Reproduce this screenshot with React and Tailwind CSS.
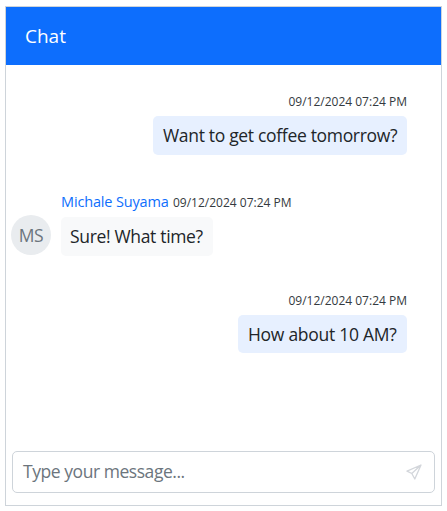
function Stamp({ className = "" }) {
  return (
    <span className={`whitespace-nowrap text-[12px] leading-[18px] text-[#343a40] ${className}`}>
      09/12/2024 07:24 PM
    </span>
  );
}

function Sent({ children, className }) {
  return (
    <div className="flex flex-col items-end">
      <Stamp />
      <div className={`mt-[5px] flex items-center rounded-[5px] bg-[#e7f0ff] pl-2.5 whitespace-nowrap text-[#212529] ${className}`}>
        {children}
      </div>
    </div>
  );
}

export default function App() {
  return (
    <div className="h-[511px] w-[447px] bg-white pt-1.5 pl-[5px] font-['Open_Sans','Noto_Sans',sans-serif] text-[17.5px] font-normal">
      <div className="flex h-[500px] w-[437px] flex-col border border-[#ced4da] bg-white">
        <header className="flex h-[58px] shrink-0 items-center bg-[#0d6efd] pl-[19px] text-[19px] text-white">
          Chat
        </header>
        <main className="flex grow flex-col pt-7 pr-[34px] pl-[5px]">
          <Sent className="h-[39px] w-[254px] tracking-[-0.32px]">Want to get coffee tomorrow?</Sent>
          <div className="mt-[37px] flex items-start gap-2.5">
            <div className="mt-[23px] flex size-10 items-center justify-center rounded-full bg-[#e9ecef] tracking-[-0.5px] text-[#6c757d]">
              MS
            </div>
            <div>
              <div className="flex h-5 items-center gap-[5px]">
                <span className="w-[107px] whitespace-nowrap pb-px text-[14.5px] tracking-[-0.15px] text-[#0d6efd]">
                  Michale Suyama
                </span>
                <Stamp className="pt-px" />
              </div>
              <div className="mt-[5px] flex h-[39px] w-[152px] items-center rounded-[5px] bg-[#f8f9fa] pl-[9px] whitespace-nowrap tracking-[-0.33px] text-[#212529]">
                Sure! What time?
              </div>
            </div>
          </div>
          <div className="mt-9">
            <Sent className="h-[38px] w-[169px] tracking-[-0.28px]">How about 10 AM?</Sent>
          </div>
        </main>
        <footer className="mx-1.5 mb-3 flex h-[42px] shrink-0 items-center justify-between rounded-[5px] border border-[#ced4da] pr-3 pl-2.5">
          <span className="pb-0.5 tracking-[-0.45px] text-[#6c757d]">Type your message...</span>
          <svg className="size-4" viewBox="0 0 16 16" fill="none" stroke="#d3d6db" strokeWidth="1.3" strokeLinejoin="round">
            <path d="M15 1 1 7.2l4.8 2.3L8.8 15 15 1ZM15 1 5.8 9.5" />
          </svg>
        </footer>
      </div>
    </div>
  );
}
